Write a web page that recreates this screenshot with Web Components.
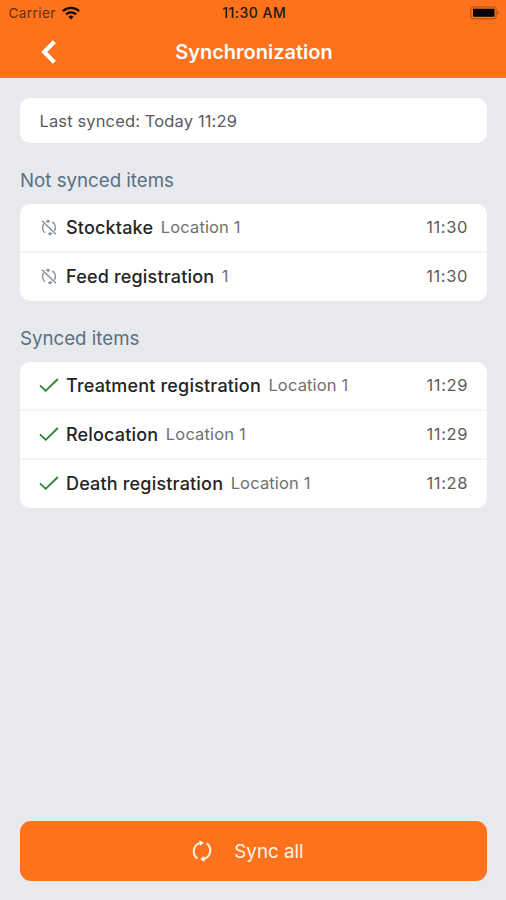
<!DOCTYPE html>
<html lang="en">
<head>
<meta charset="utf-8">
<title>Synchronization</title>
<style>
  body {
    margin: 0;
    background: #e7e9ed;
    font-family: Inter, "Liberation Sans", sans-serif;
    -webkit-font-smoothing: antialiased;
  }
</style>
</head>
<body>
<sync-screen></sync-screen>

<script>
const icons = {
  back: `<svg width="18" height="26" viewBox="0 0 18 26"><path d="M14.3 2.8 4.3 13l10 10.2" fill="none" stroke="currentColor" stroke-width="4.3"/></svg>`,
  wifi: `<svg width="18" height="14" viewBox="0 0 18 14"><g fill="none" stroke="currentColor" stroke-width="2.3"><path d="M.9 5.1a11.8 11.8 0 0 1 16.2 0"/><path d="M3.9 8.4a7.5 7.5 0 0 1 10.2 0"/></g><path d="M6.4 10.8a3.8 3.8 0 0 1 5.2 0L9 13.6z" fill="currentColor"/></svg>`,
  battery: `<svg width="30" height="14" viewBox="0 0 30 14"><rect x=".8" y=".8" width="25.4" height="12" rx="2.6" fill="none" stroke="#b8540f" stroke-width="1.2"/><rect x="3" y="2.8" width="21.5" height="8" rx=".8" fill="#000"/><path d="M27.4 4.6c2 .8 2 3.6 0 4.4z" fill="#b8540f"/></svg>`,
  sync: `<svg viewBox="0 0 20 22"><g fill="none" stroke="currentColor" stroke-width="2"><path d="M5.4 18.6A8.8 8.8 0 0 1 8.6 2.9"/><path d="M14.6 3.4A8.8 8.8 0 0 1 11.4 19.1"/></g><path d="M7.4 0 11.8 2.7 7.9 6.1zM12.6 22 8.2 19.3l3.9-3.4z" fill="currentColor"/></svg>`,
  pending: `<svg viewBox="0 0 16 17"><g fill="none" stroke="currentColor" stroke-width="1.3"><path d="M2.7 4.9A6.6 6.6 0 0 0 4 13.8"/><path d="M5 2.7 7 2.1"/><path d="M11.2 2.9A6.5 6.5 0 0 1 13.5 11.8"/><path d="M9 14.9 11.2 14.2"/><path d="M1 1.8 15 15.3"/></g><path d="M6.2.2 9.3 2.1 6.7 4.5zM9.9 16.8 6.8 14.9l2.6-2.4z" fill="currentColor"/></svg>`,
  check: `<svg viewBox="0 0 20 14"><path d="M1 7.3 6.7 12.8 18.8 1" fill="none" stroke="#27852b" stroke-width="1.8"/></svg>`
};

class StatusBar extends HTMLElement {
  constructor() {
    super();
    this.attachShadow({ mode: 'open' });
    this.shadowRoot.innerHTML = `
      <style>
        :host {
          display: grid;
          grid-template-columns: 1fr auto 1fr;
          align-items: center;
          height: 26px;
          padding: 0 6px 0 8.5px;
          color: #24150c;
          font-size: 13.5px;
          line-height: 26px;
        }
        .carrier {
          display: flex;
          align-items: center;
          gap: 6px;
          color: #63300f;
          letter-spacing: 0.45px;
        }
        .time {
          font-weight: 500;
          font-size: 14px;
          letter-spacing: 0.5px;
        }
        .battery {
          display: flex;
          justify-content: flex-end;
        }
        svg {
          display: block;
        }
        .wifi {
          color: #160a02;
        }
      </style>
      <div class="carrier"><span>Carrier</span><span class="wifi">${icons.wifi}</span></div>
      <div class="time">11:30 AM</div>
      <div class="battery">${icons.battery}</div>
    `;
  }
}

class NavBar extends HTMLElement {
  constructor() {
    super();
    this.attachShadow({ mode: 'open' });
    this.shadowRoot.innerHTML = `
      <style>
        :host {
          display: grid;
          grid-template-columns: 1fr auto 1fr;
          align-items: center;
          height: 52px;
          padding: 0 38px 0 40px;
          color: #fff;
        }
        svg {
          display: block;
        }
        h1 {
          margin: 0;
          font-size: 20px;
          font-weight: 600;
        }
      </style>
      <div class="back">${icons.back}</div>
      <h1><slot></slot></h1>
    `;
  }
}

// White rounded box, rows are slotted in
class ItemCard extends HTMLElement {
  constructor() {
    super();
    this.attachShadow({ mode: 'open' });
    this.shadowRoot.innerHTML = `
      <style>
        :host {
          display: block;
          background: #fff;
          border-radius: 10px;
          overflow: hidden;
        }
        ::slotted(sync-item:not(:first-child)) {
          border-top: 2px solid #f4f5f6;
        }
      </style>
      <slot></slot>
    `;
  }
}

class SectionTitle extends HTMLElement {
  constructor() {
    super();
    this.attachShadow({ mode: 'open' });
    this.shadowRoot.innerHTML = `
      <style>
        :host {
          display: block;
          height: 61px;
          line-height: 75px;
          color: #597083;
          font-size: 18.7px;
        }
      </style>
      <slot></slot>
    `;
  }
}

class SyncItem extends HTMLElement {
  constructor() {
    super();
    this.attachShadow({ mode: 'open' });
  }

  connectedCallback() {
    const icon = this.getAttribute('data-icon');
    const detail = this.getAttribute('data-detail');
    const time = this.getAttribute('data-time');

    this.shadowRoot.innerHTML = `
      <style>
        :host {
          display: flex;
          align-items: center;
          height: 46px;
          padding: 0 19px 1px;
          color: #707070;
          font-size: 16.5px;
        }
        :host(:last-child) {
          padding-bottom: 2px;
        }
        .icon {
          display: flex;
          justify-content: center;
          width: 20px;
          margin-right: 7px;
          color: #7b8d9b;
        }
        .pending svg {
          width: 16px;
          height: 17px;
        }
        .check svg {
          width: 20px;
          height: 14px;
        }
        .name {
          color: #242424;
          font-size: 18px;
          font-weight: 500;
          letter-spacing: 0.18px;
          margin-right: 7.5px;
        }
        .detail {
          flex: 1;
          letter-spacing: 0.15px;
        }
        .time {
          color: #5c5c5c;
          letter-spacing: 0.6px;
        }
      </style>
      <span class="icon ${icon}">${icons[icon]}</span>
      <span class="name"><slot></slot></span>
      <span class="detail">${detail}</span>
      <span class="time">${time}</span>
    `;
  }
}

class SyncButton extends HTMLElement {
  constructor() {
    super();
    this.attachShadow({ mode: 'open' });
    this.shadowRoot.innerHTML = `
      <style>
        :host {
          display: block;
        }
        button {
          display: flex;
          align-items: center;
          justify-content: center;
          gap: 22px;
          width: 100%;
          height: 60px;
          margin: 0;
          padding: 0 11px 0 0;
          border: 0;
          border-radius: 11px;
          background: #fe721b;
          color: #fff2e9;
          font-family: inherit;
          font-size: 18.8px;
        }
        svg {
          display: block;
          width: 20px;
          height: 22px;
        }
      </style>
      <button>${icons.sync}<span><slot></slot></span></button>
    `;
  }
}

class SyncScreen extends HTMLElement {
  constructor() {
    super();
    this.attachShadow({ mode: 'open' });
    this.shadowRoot.innerHTML = `
      <style>
        :host {
          display: flex;
          flex-direction: column;
          height: 900px;
          box-sizing: border-box;
        }
        header {
          background: #fe721b;
        }
        main {
          flex: 1;
          padding: 20px 19px 0 20px;
        }
        footer {
          padding: 0 19px 19px 20px;
        }
        .last {
          height: 45px;
          padding: 0 19.5px;
          line-height: 46px;
          color: #5a5a5a;
          font-size: 16.5px;
          letter-spacing: 0.13px;
        }
      </style>
      <header>
        <status-bar></status-bar>
        <nav-bar>Synchronization</nav-bar>
      </header>
      <main>
        <item-card><div class="last">Last synced: Today 11:29</div></item-card>
        <section-title>Not synced items</section-title>
        <item-card>
          <sync-item data-icon="pending" data-detail="Location 1" data-time="11:30">Stocktake</sync-item>
          <sync-item data-icon="pending" data-detail="1" data-time="11:30">Feed registration</sync-item>
        </item-card>
        <section-title>Synced items</section-title>
        <item-card>
          <sync-item data-icon="check" data-detail="Location 1" data-time="11:29">Treatment registration</sync-item>
          <sync-item data-icon="check" data-detail="Location 1" data-time="11:29">Relocation</sync-item>
          <sync-item data-icon="check" data-detail="Location 1" data-time="11:28">Death registration</sync-item>
        </item-card>
      </main>
      <footer>
        <sync-button>Sync all</sync-button>
      </footer>
    `;
  }
}

customElements.define('status-bar', StatusBar);
customElements.define('nav-bar', NavBar);
customElements.define('item-card', ItemCard);
customElements.define('section-title', SectionTitle);
customElements.define('sync-item', SyncItem);
customElements.define('sync-button', SyncButton);
customElements.define('sync-screen', SyncScreen);
</script>
</body>
</html>
